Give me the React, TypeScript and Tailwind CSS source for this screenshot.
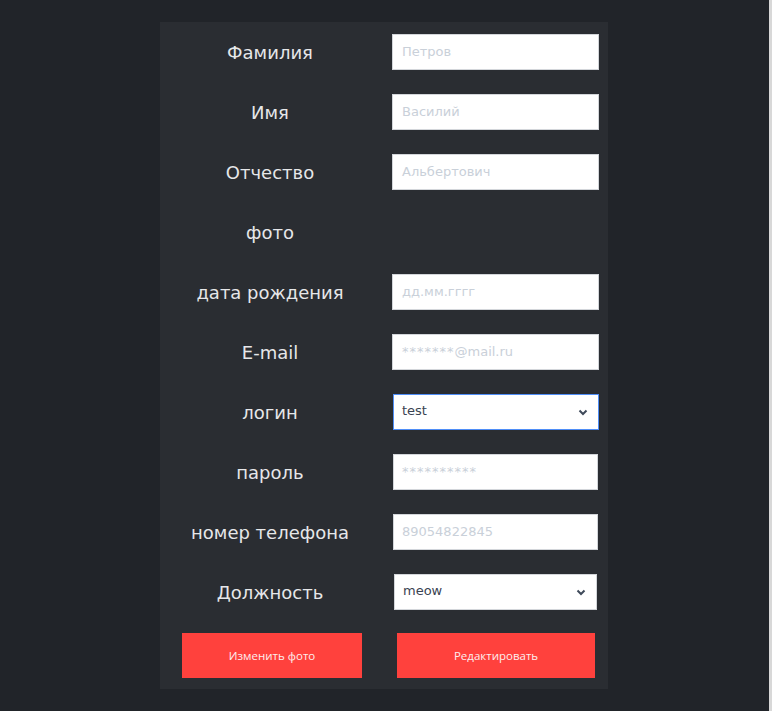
import React from 'react';

type Row = {
    label: string;
    kind: 'input' | 'select' | 'none';
    placeholder?: string;
    value?: string;
    focused?: boolean;
    shifted?: boolean;
};

const rows: Row[] = [
    { label: 'Фамилия', kind: 'input', placeholder: 'Петров' },
    { label: 'Имя', kind: 'input', placeholder: 'Василий' },
    { label: 'Отчество', kind: 'input', placeholder: 'Альбертович' },
    { label: 'фото', kind: 'none' },
    { label: 'дата рождения', kind: 'input', placeholder: 'дд.мм.гггг' },
    { label: 'E-mail', kind: 'input', placeholder: '*******@mail.ru' },
    { label: 'логин', kind: 'select', value: 'test', focused: true },
    { label: 'пароль', kind: 'input', placeholder: '**********', shifted: true },
    { label: 'номер телефона', kind: 'input', placeholder: '89054822845', shifted: true },
    { label: 'Должность', kind: 'select', value: 'meow' },
];

const Chevron = () => (
    <svg width="10" height="7" viewBox="0 0 10 7" className="shrink-0">
        <path d="M1.5 1.5 L5 5 L8.5 1.5" fill="none" stroke="#3f4a5a" strokeWidth="2" />
    </svg>
);

// asterisks in the placeholders render wider in the original
const Placeholder = ({ text }: { text: string }) => {
    const m = text.match(/^(\**)(.*)$/);
    const stars = m ? m[1] : '';
    const rest = m ? m[2] : text;
    return (
        <span className="text-[13px] text-[#c9d0d9]">
            {stars && <span className="tracking-[1px]">{stars}</span>}
            {rest}
        </span>
    );
};

const Field = ({ row }: { row: Row }) => {
    if (row.kind === 'none') return null;
    if (row.kind === 'select') {
        return (
            <div
                className={
                    row.focused
                        ? 'ml-[1px] flex h-[36px] w-[206px] items-center justify-between border border-[#4f8ef7] bg-white pl-[8px] pr-[10px]'
                        : 'ml-[2px] flex h-[36px] w-[203px] items-center justify-between border border-[#d3d6da] bg-white pl-[8px] pr-[10px]'
                }
            >
                <span className="-mt-[3px] text-[13px] text-[#3a4352]">{row.value}</span>
                <Chevron />
            </div>
        );
    }
    return (
        <div
            className={
                row.shifted
                    ? 'ml-[1px] flex h-[36px] w-[205px] items-center border border-[#d3d6da] bg-white px-[8px]'
                    : 'flex h-[36px] w-[207px] items-center border border-[#d3d6da] bg-white px-[9px]'
            }
        >
            <Placeholder text={row.placeholder ?? ''} />
        </div>
    );
};

export default function App() {
    return (
        <div className="flex min-h-[711px] w-full bg-[#212429]" style={{ fontFamily: '"DejaVu Sans", Verdana, sans-serif' }}>
            <div className="flex flex-1 justify-center pt-[22px]">
                <div className="ml-[-1px] flex h-[667px] w-[448px] flex-col bg-[#2a2d32] pr-[9px]">
                    {rows.map((row) => (
                        <div key={row.label} className="flex h-[60px] items-center">
                            <div className="w-[220px] text-center text-[18px] text-[#e6e7e9]">{row.label}</div>
                            <div className="ml-[12px]">
                                <Field row={row} />
                            </div>
                        </div>
                    ))}
                    <div className="mt-[11px] flex" style={{ fontFamily: '"Open Sans", sans-serif' }}>
                        <div className="flex w-[220px] justify-center pl-[4px]">
                            <button className="h-[45px] w-[180px] bg-[#ff413d] text-[11.5px] text-[#fdeeee]">Изменить фото</button>
                        </div>
                        <div className="ml-[17px] flex">
                            <button className="h-[45px] w-[198px] bg-[#ff413d] text-[11.5px] text-[#fdeeee]">Редактировать</button>
                        </div>
                    </div>
                </div>
            </div>
            <div className="w-[3px] bg-[#d8d8d8]" />
        </div>
    );
}
